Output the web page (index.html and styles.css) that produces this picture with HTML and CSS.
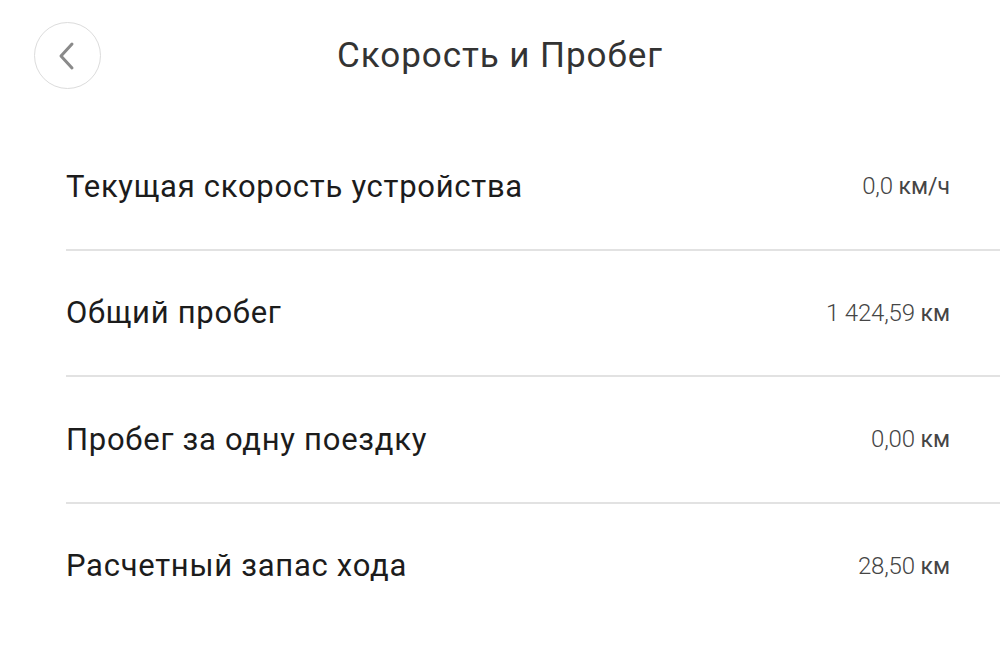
FILE: index.html
```html
<!DOCTYPE html>
<html lang="ru">
<head>
<meta charset="utf-8">
<link rel="stylesheet" href="styles.css">
</head>
<body>
<div class="page">
  <header class="header">
    <div class="header-left">
      <button class="back" aria-label="Назад">
        <svg width="30" height="30" viewBox="0 0 30 30"><path d="M21 3 L10 15 L21 27" fill="none" stroke="#8a8a8a" stroke-width="3" stroke-linecap="round" stroke-linejoin="round"/></svg>
      </button>
    </div>
    <h1 class="title">Скорость и Пробег</h1>
    <div class="header-right"></div>
  </header>
  <ul class="list">
    <li class="row"><span class="label">Текущая скорость устройства</span><span class="value"><span class="num">0,0</span> км/ч</span></li>
    <li class="row"><span class="label">Общий пробег</span><span class="value"><span class="num">1 424,59</span> км</span></li>
    <li class="row"><span class="label">Пробег за одну поездку</span><span class="value"><span class="num">0,00</span> км</span></li>
    <li class="row last"><span class="label">Расчетный запас хода</span><span class="value"><span class="num">28,50</span> км</span></li>
  </ul>
</div>
</body>
</html>
```

FILE: styles.css
```css
html, body {
  margin: 0;
  padding: 0;
  background: #ffffff;
}
body {
  font-family: Roboto, "Liberation Sans", sans-serif;
  width: 1000px;
  height: 656px;
  overflow: hidden;
}
.page {
  display: flex;
  flex-direction: column;
}
.header {
  display: grid;
  grid-template-columns: 1fr auto 1fr;
  align-items: center;
  padding-top: 22px;
  height: 67px;
}
.header-left {
  padding-left: 34px;
  display: flex;
}
.back {
  width: 67px;
  height: 67px;
  border-radius: 50%;
  border: 1.5px solid #dcdcdc;
  background: #fff;
  display: flex;
  align-items: center;
  justify-content: center;
  padding: 0 4px 0 0;
  box-sizing: border-box;
}
.title {
  margin: 0;
  font-weight: 400;
  font-size: 35px;
  color: #333333;
  letter-spacing: 0.95px;
}
.list {
  list-style: none;
  margin: 35px 0 0 0;
  padding: 0 0 0 66px;
}
.row {
  display: flex;
  align-items: center;
  justify-content: space-between;
  height: 124.5px;
  border-bottom: 2px solid #e2e2e2;
  padding-right: 50px;
}
.row.last {
  border-bottom: none;
}
.label {
  font-size: 31px;
  color: #1c1c1c;
  letter-spacing: 0.72px;
}
.value {
  font-size: 23px;
  color: #454545;
}
.num {
  font-size: 24px;
  font-weight: 300;
  letter-spacing: -0.2px;
}
```
